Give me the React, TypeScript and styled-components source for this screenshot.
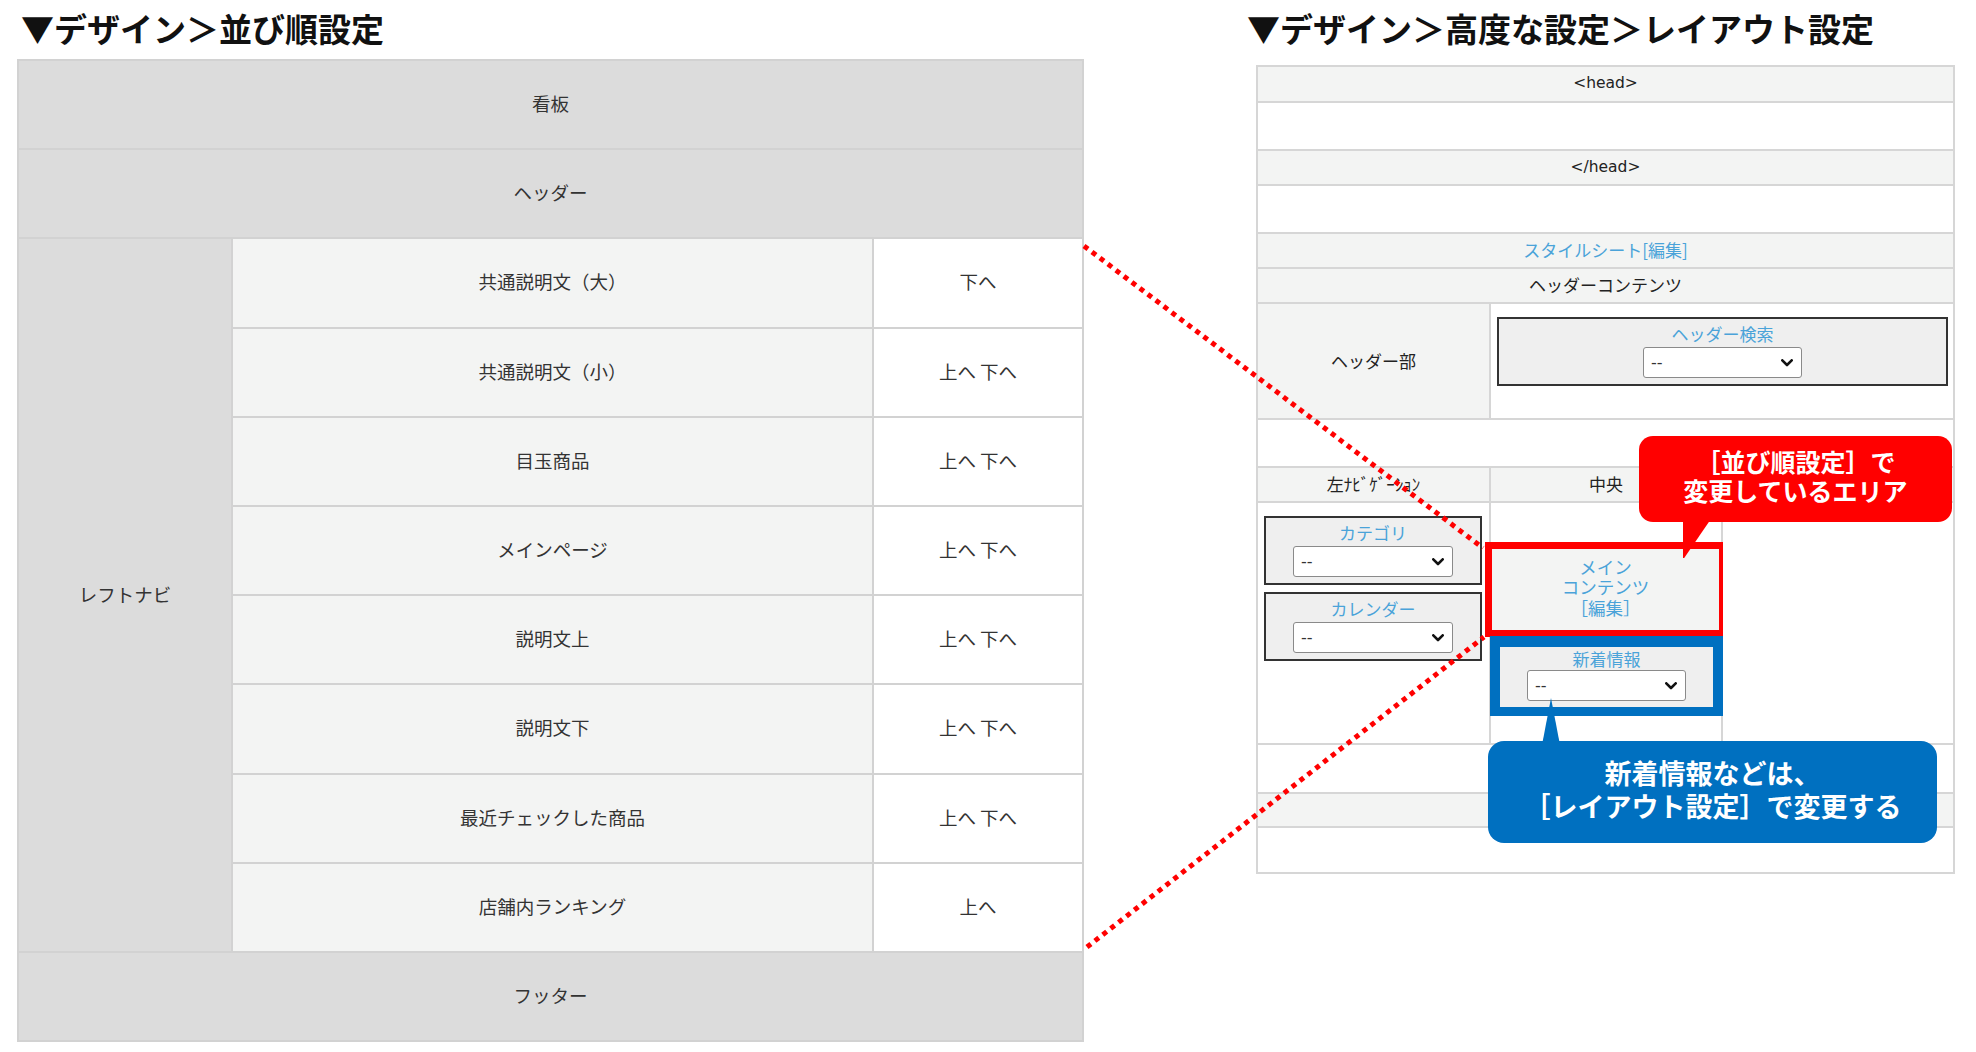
import React from "react";
import styled, { createGlobalStyle } from "styled-components";

const GlobalStyle = createGlobalStyle`
  html, body { margin: 0; padding: 0; background: #fff; }
  body { font-family: "Noto Sans CJK JP", "Noto Sans", sans-serif; color: #333; }
  * { box-sizing: border-box; }
`;

const Page = styled.div`
  position: relative;
  width: 1976px;
  height: 1052px;
  overflow: hidden;
  display: flex;
  align-items: flex-start;
  padding-left: 17px;
`;

const Section = styled.section<{ $w: number; $ml?: number }>`
  width: ${(p) => p.$w}px;
  margin-left: ${(p) => p.$ml ?? 0}px;
  display: flex;
  flex-direction: column;
  flex: none;
`;

const Title = styled.h2<{ $indent: number }>`
  margin: 8px 0 0 ${(p) => p.$indent}px;
  font-size: 33px;
  font-weight: 700;
  line-height: 40px;
  color: #111;
  white-space: nowrap;
`;

/* ---------- left: 並び順設定 ---------- */

const OrderGrid = styled.div`
  margin-top: 11px;
  display: grid;
  grid-template-columns: 212px 639px 208px;
  grid-template-rows: repeat(11, 87.2px);
  gap: 2px;
  padding: 2px;
  background: #d2d2d2;
`;

type Tone = "gray" | "light" | "white";
const toneBg = (t: Tone) => (t === "gray" ? "#dcdcdc" : t === "light" ? "#f3f4f3" : "#ffffff");

const OrderCell = styled.div<{ $tone: Tone; $full?: boolean; $tall?: boolean }>`
  display: flex;
  align-items: center;
  justify-content: center;
  padding-bottom: 3px;
  font-size: 18.5px;
  color: #333;
  background: ${(p) => toneBg(p.$tone)};
  ${(p) => (p.$full ? "grid-column: 1 / -1;" : "")}
  ${(p) => (p.$tall ? "grid-row: span 8;" : "")}
  white-space: pre;
`;

/* ---------- right: レイアウト設定 ---------- */

const LayoutTable = styled.div`
  margin: 17px 0 0 9px;
  width: 699px;
  display: flex;
  flex-direction: column;
  gap: 2px;
  padding: 2px;
  background: #d6d6d6;
`;

const Band = styled.div<{ $h: number; $tone: Tone; $latin?: boolean }>`
  height: ${(p) => p.$h}px;
  background: ${(p) => toneBg(p.$tone)};
  display: flex;
  align-items: center;
  justify-content: center;
  padding-bottom: 2px;
  font-family: ${(p) => (p.$latin ? '"DejaVu Sans", "Noto Sans CJK JP", sans-serif' : 'inherit')};
  font-size: ${(p) => (p.$latin ? 15.5 : 17)}px;
  color: #222;
`;

const SplitRow = styled.div<{ $cols: string; $h: number }>`
  display: grid;
  grid-template-columns: ${(p) => p.$cols};
  gap: 2px;
  height: ${(p) => p.$h}px;
`;

const Cell = styled.div<{ $tone: Tone; $top?: boolean }>`
  background: ${(p) => toneBg(p.$tone)};
  display: flex;
  flex-direction: column;
  align-items: ${(p) => (p.$top ? "stretch" : "center")};
  justify-content: ${(p) => (p.$top ? "flex-start" : "center")};
  padding-bottom: ${(p) => (p.$top ? 0 : 2)}px;
  font-size: 17px;
  color: #222;
  min-width: 0;
`;

const Link = styled.span`
  color: #4aa3d9;
`;

const BlockBox = styled.div<{ $mt: number; $ml: number; $mr: number }>`
  margin: ${(p) => p.$mt}px ${(p) => p.$mr}px 0 ${(p) => p.$ml}px;
  border: 2px solid #333;
  background: #efefef;
  display: flex;
  flex-direction: column;
  align-items: center;
  padding: 3px 0 6px;
`;

const BlockLabel = styled.div`
  font-size: 17px;
  line-height: 24px;
  color: #4aa3d9;
  margin-bottom: 1px;
`;

const SelectWrap = styled.div<{ $w: number }>`
  position: relative;
  width: ${(p) => p.$w}px;
  height: 31px;
  flex: none;
`;

const NativeSelect = styled.select`
  appearance: none;
  -webkit-appearance: none;
  width: 100%;
  height: 100%;
  border: 1px solid #8a8a8a;
  border-radius: 3px;
  background: #fff;
  font: 16px "DejaVu Sans", sans-serif;
  color: #333;
  padding: 0 0 0 7px;
  margin: 0;
`;

const Chevron = styled.svg`
  position: absolute;
  right: 9px;
  top: 50%;
  transform: translateY(-50%);
  pointer-events: none;
`;

const MainHighlight = styled.div`
  margin: 39px -5px 0 -6px;
  height: 95px;
  border: 7px solid #ff0000;
  background: #f3f4f3;
  display: flex;
  flex-direction: column;
  align-items: center;
  justify-content: center;
  padding-bottom: 4px;
  font-size: 17.5px;
  line-height: 20.5px;
  color: #4aa3d9;
`;

const NewsHighlight = styled.div`
  margin: -1px -2px 0 -1px;
  border: 10px solid #0070c0;
  border-top-width: 11px;
  border-bottom-width: 9px;
  background: #efefef;
  display: flex;
  flex-direction: column;
  align-items: center;
  padding: 0 0 6px;
`;

const NewsLabel = styled.div`
  font-size: 17px;
  line-height: 23px;
  color: #4aa3d9;
`;

/* ---------- overlays ---------- */

const Callout = styled.div<{
  $bg: string;
  $x: number;
  $y: number;
  $w: number;
  $h: number;
  $fs: number;
  $lh: number;
  $r: number;
  $pb: number;
}>`
  position: absolute;
  left: ${(p) => p.$x}px;
  top: ${(p) => p.$y}px;
  width: ${(p) => p.$w}px;
  height: ${(p) => p.$h}px;
  background: ${(p) => p.$bg};
  border-radius: ${(p) => p.$r}px;
  color: #fff;
  font-weight: 700;
  font-size: ${(p) => p.$fs}px;
  line-height: ${(p) => p.$lh}px;
  padding-bottom: ${(p) => p.$pb}px;
  display: flex;
  flex-direction: column;
  align-items: center;
  justify-content: center;
  text-align: center;
  white-space: nowrap;
  z-index: 3;
`;

const Tail = styled.span<{ $bg: string; $x: number; $y: number; $w: number; $h: number; $clip: string }>`
  position: absolute;
  left: ${(p) => p.$x}px;
  top: ${(p) => p.$y}px;
  width: ${(p) => p.$w}px;
  height: ${(p) => p.$h}px;
  background: ${(p) => p.$bg};
  clip-path: ${(p) => p.$clip};
`;

const Leaders = styled.svg`
  position: absolute;
  left: 0;
  top: 0;
  pointer-events: none;
  z-index: 2;
`;

const Select: React.FC<{ w: number }> = ({ w }) => (
  <SelectWrap $w={w}>
    <NativeSelect defaultValue="--">
      <option>--</option>
    </NativeSelect>
    <Chevron width="12" height="8" viewBox="0 0 12 8">
      <polyline points="1.3,1.3 6,6 10.7,1.3" fill="none" stroke="#111" strokeWidth="2.6" strokeLinecap="round" strokeLinejoin="round" />
    </Chevron>
  </SelectWrap>
);

const orderRows: [string, string][] = [
  ["共通説明文（大）", "下へ"],
  ["共通説明文（小）", "上へ 下へ"],
  ["目玉商品", "上へ 下へ"],
  ["メインページ", "上へ 下へ"],
  ["説明文上", "上へ 下へ"],
  ["説明文下", "上へ 下へ"],
  ["最近チェックした商品", "上へ 下へ"],
  ["店舗内ランキング", "上へ"],
];

export default function App() {
  return (
    <>
      <GlobalStyle />
      <Page>
        <Section $w={1067}>
          <Title $indent={4}>▼デザイン＞並び順設定</Title>
          <OrderGrid>
            <OrderCell $tone="gray" $full>看板</OrderCell>
            <OrderCell $tone="gray" $full>ヘッダー</OrderCell>
            <OrderCell $tone="gray" $tall>レフトナビ</OrderCell>
            {orderRows.map(([name, act]) => (
              <React.Fragment key={name}>
                <OrderCell $tone="light">{name}</OrderCell>
                <OrderCell $tone="white">{act}</OrderCell>
              </React.Fragment>
            ))}
            <OrderCell $tone="gray" $full>フッター</OrderCell>
          </OrderGrid>
        </Section>

        <Section $w={709} $ml={163}>
          <Title $indent={0}>▼デザイン＞高度な設定＞レイアウト設定</Title>
          <LayoutTable>
            <Band $h={34} $tone="light" $latin>&lt;head&gt;</Band>
            <Band $h={46} $tone="white" />
            <Band $h={33} $tone="light" $latin>&lt;/head&gt;</Band>
            <Band $h={46} $tone="white" />
            <Band $h={33} $tone="light">
              <Link>スタイルシート[編集]</Link>
            </Band>
            <Band $h={33} $tone="light">ヘッダーコンテンツ</Band>
            <SplitRow $cols="231px 1fr" $h={114}>
              <Cell $tone="light">ヘッダー部</Cell>
              <Cell $tone="white" $top>
                <BlockBox $mt={13} $ml={6} $mr={5}>
                  <BlockLabel>ヘッダー検索</BlockLabel>
                  <Select w={159} />
                </BlockBox>
              </Cell>
            </SplitRow>
            <Band $h={46} $tone="white" />
            <SplitRow $cols="231px 230px 230px" $h={33}>
              <Cell $tone="light">左ﾅﾋﾞｹﾞｰｼｮﾝ</Cell>
              <Cell $tone="light">中央</Cell>
              <Cell $tone="light" />
            </SplitRow>
            <SplitRow $cols="231px 230px 230px" $h={240}>
              <Cell $tone="white" $top>
                <BlockBox $mt={13} $ml={6} $mr={7}>
                  <BlockLabel>カテゴリ</BlockLabel>
                  <Select w={160} />
                </BlockBox>
                <BlockBox $mt={7} $ml={6} $mr={7}>
                  <BlockLabel>カレンダー</BlockLabel>
                  <Select w={160} />
                </BlockBox>
              </Cell>
              <Cell $tone="white" $top>
                <MainHighlight>
                  <span>メイン</span>
                  <span>コンテンツ</span>
                  <span>［編集］</span>
                </MainHighlight>
                <NewsHighlight>
                  <NewsLabel>新着情報</NewsLabel>
                  <Select w={159} />
                </NewsHighlight>
              </Cell>
              <Cell $tone="white" />
            </SplitRow>
            <Band $h={47} $tone="white" />
            <Band $h={32} $tone="light" />
            <Band $h={44} $tone="white" />
          </LayoutTable>
        </Section>

        <Leaders width="1976" height="1052" viewBox="0 0 1976 1052">
          <line x1="1084" y1="246" x2="1483" y2="548" stroke="#ff0000" strokeWidth="5" strokeDasharray="5 5" />
          <line x1="1087" y1="947" x2="1484" y2="637" stroke="#ff0000" strokeWidth="5" strokeDasharray="5 5" />
        </Leaders>

        <Callout $bg="#ff0000" $x={1639} $y={436} $w={313} $h={86} $fs={25} $lh={29} $r={14} $pb={6}>
          <span>［並び順設定］で</span>
          <span>変更しているエリア</span>
          <Tail $bg="#ff0000" $x={44} $y={80} $w={30} $h={42} $clip="polygon(0 0, 100% 0, 4% 100%, 0 100%)" />
        </Callout>

        <Callout $bg="#0070c0" $x={1488} $y={741} $w={449} $h={102} $fs={27} $lh={33} $r={16} $pb={6}>
          <span>新着情報などは、</span>
          <span>［レイアウト設定］で変更する</span>
          <Tail $bg="#0070c0" $x={54} $y={-43} $w={18} $h={47} $clip="polygon(50% 0, 100% 100%, 0 100%)" />
        </Callout>
      </Page>
    </>
  );
}
